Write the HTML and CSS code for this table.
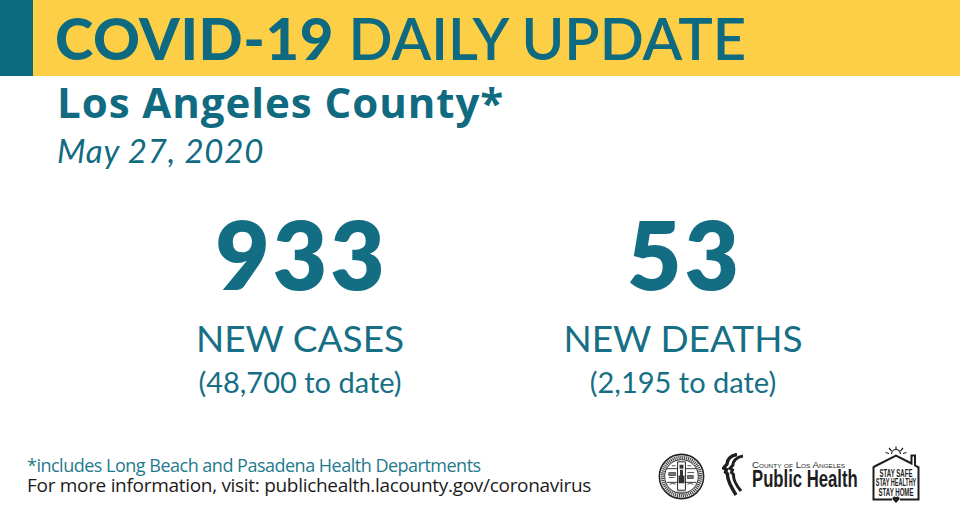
FILE: index.html
```html
<!DOCTYPE html>
<html lang="en">
<head>
<meta charset="utf-8">
<title>COVID-19 Daily Update</title>
<link rel="stylesheet" href="styles.css">
</head>
<body>
<div class="page">
  <header class="banner">
    <div class="accent"></div>
    <div class="bar">
      <h1 class="title"><span class="title-strong">COVID-19</span> DAILY UPDATE</h1>
    </div>
  </header>

  <section class="intro">
    <h2 class="county">Los Angeles County*</h2>
    <p class="date">May 27, 2020</p>
  </section>

  <section class="stats">
    <div class="stat">
      <div class="stat-num">933</div>
      <div class="stat-label">NEW CASES</div>
      <div class="stat-total">(48,700 to date)</div>
    </div>
    <div class="stat">
      <div class="stat-num">53</div>
      <div class="stat-label">NEW DEATHS</div>
      <div class="stat-total">(2,195 to date)</div>
    </div>
  </section>

  <footer class="footer">
    <div class="notes">
      <p class="note">*includes Long Beach and Pasadena Health Departments</p>
      <p class="info">For more information, visit: publichealth.lacounty.gov/coronavirus</p>
    </div>
    <div class="logos">
      <svg class="seal" viewBox="0 0 48 48" width="47" height="47" aria-label="County seal">
        <circle cx="24" cy="24" r="22.6" fill="#fff" stroke="#222" stroke-width="1.6"/>
        <circle cx="24" cy="24" r="19.5" fill="none" stroke="#444" stroke-width="3.4" stroke-dasharray="1.2 0.8"/>
        <circle cx="24" cy="24" r="17.2" fill="#fff" stroke="#222" stroke-width="1"/>
        <path d="M9 16 H39 M9 30 H39" stroke="#333" stroke-width="1"/>
        <path d="M20 9 H28 V38 H20 Z" fill="#fff" stroke="#222" stroke-width="1"/>
        <rect x="22" y="12" width="4" height="4" fill="#333"/>
        <path d="M22.5 17 h3 v6 h1.5 v8 h-6 v-8 h1.5 Z" fill="#333"/>
        <path d="M11 20 h7 v3 h-7 Z M11 25 h6 M30 20 h7 M30 23 h6 v3 h-6 Z" stroke="#555" stroke-width="1" fill="#777"/>
        <path d="M12 32 q3 -2 6 0 M30 32 q3 -2 6 0 M14 13 h4 M30 13 h4" stroke="#555" stroke-width="1" fill="none"/>
        <path d="M18 40 h12" stroke="#555" stroke-width="1"/>
      </svg>
      <svg class="ph" viewBox="0 0 138 44" width="138" height="44" aria-label="County of Los Angeles Public Health">
        <path d="M15 1.5 C8 2.5 5 7 5 11 L1.5 15 L4.5 16.5 L3.5 19 L5.5 21 C5 27 9 34 14 42" fill="none" stroke="#1e1e1e" stroke-width="3.4"/>
        <path d="M21 3 C14 4 11 8.5 11 12 L8 15.5 L10.5 17 L9.5 19.5 L11.5 21.5 C11 27 14 32 19 38" fill="none" stroke="#1e1e1e" stroke-width="3"/>
        <text class="ph-county" x="30" y="15" textLength="93" lengthAdjust="spacingAndGlyphs">County of Los Angeles</text>
        <g transform="translate(30 34) scale(1 1.42)">
          <text class="ph-name" x="0" y="0">Public Health</text>
        </g>
      </svg>
      <svg class="stay" viewBox="0 0 50 60" width="50" height="60" aria-label="Stay safe, stay healthy, stay home">
        <path d="M20.5 9 a4.5 4.5 0 0 1 9 0" fill="none" stroke="#222" stroke-width="1.2"/>
        <path d="M25 1.5 V5 M18 3 L20.5 6 M32 3 L29.5 6 M14.5 7.5 L18 8.5 M35.5 7.5 L32 8.5" stroke="#222" stroke-width="1.2"/>
        <path d="M2.5 22 L25 10.5 L40.5 18.5 V10.5 H44 V20.5 L47.5 22.3" fill="none" stroke="#1e1e1e" stroke-width="2"/>
        <path d="M2.5 21.5 V54.5 H21 M29 54.5 H47.5 V21.5" fill="none" stroke="#1e1e1e" stroke-width="2"/>
        <path d="M25 58 L21.8 54.8 A1.8 1.8 0 0 1 25 52.3 A1.8 1.8 0 0 1 28.2 54.8 Z" fill="#1e1e1e"/>
        <g transform="translate(25 31.5) scale(1 1.73)">
          <text class="stay-text stay-a" x="0" y="0" text-anchor="middle">STAY SAFE</text>
        </g>
        <g transform="translate(25 41) scale(1 1.91)">
          <text class="stay-text stay-b" x="0" y="0" text-anchor="middle">STAY HEALTHY</text>
        </g>
        <g transform="translate(25 50.5) scale(1 1.73)">
          <text class="stay-text stay-a" x="0" y="0" text-anchor="middle">STAY HOME</text>
        </g>
      </svg>
    </div>
  </footer>
</div>
</body>
</html>
```

FILE: styles.css
```css
* { box-sizing: border-box; }

html, body {
  margin: 0;
  padding: 0;
  background: #ffffff;
}

.page {
  width: 960px;
  height: 514px;
  overflow: hidden;
  display: flex;
  flex-direction: column;
  background: #ffffff;
  font-family: "Lato", "Open Sans", "DejaVu Sans", sans-serif;
  color: #0f6b81;
}

/* ---------- banner ---------- */
.banner {
  display: flex;
  height: 76px;
  flex: none;
}

.accent {
  width: 33px;
  background: #0b6a80;
}

.bar {
  flex: 1;
  background: #fdcf46;
  padding-left: 22px;
}

.title {
  margin: 0;
  font-size: 58px;
  line-height: 76px;
  font-weight: 600;
  color: #0e6a80;
  white-space: nowrap;
}

.title-strong {
  font-weight: 900;
  letter-spacing: 0.6px;
}

/* ---------- intro ---------- */
.intro {
  padding-left: 57px;
}

.county {
  margin: 5px 0 0;
  font-family: "Open Sans", "Lato", sans-serif;
  font-size: 42px;
  line-height: 42px;
  font-weight: 700;
  letter-spacing: 0.95px;
  color: #106b81;
  white-space: nowrap;
}

.date {
  margin: 11px 0 0;
  font-size: 33px;
  line-height: 33px;
  font-style: italic;
  font-weight: 400;
  letter-spacing: 0.8px;
  color: #116b81;
}

/* ---------- stats ---------- */
.stats {
  display: flex;
  gap: 143px;
  padding-left: 180px;
  margin-top: 40px;
}

.stat {
  width: 240px;
  display: flex;
  flex-direction: column;
  align-items: center;
  text-align: center;
}

.stat-num {
  font-size: 94px;
  line-height: 94px;
  font-weight: 800;
  letter-spacing: 3px;
  margin-right: -3px;
  color: #136e84;
}

.stat-label {
  margin-top: 18px;
  font-size: 37px;
  line-height: 37px;
  font-weight: 400;
  color: #166f85;
  white-space: nowrap;
}

.stat-total {
  margin-top: 11px;
  font-size: 29px;
  line-height: 29px;
  font-weight: 400;
  color: #166f85;
  white-space: nowrap;
}

/* ---------- footer ---------- */
.footer {
  margin-top: auto;
  display: flex;
  justify-content: space-between;
  align-items: center;
  padding: 0 39px 9px 27px;
}

.notes {
  font-family: "Open Sans", "DejaVu Sans", sans-serif;
  white-space: nowrap;
}

.note {
  margin: 0;
  font-size: 18px;
  line-height: 20px;
  letter-spacing: -0.5px;
  color: #1f7a8e;
}

.info {
  margin: 0;
  font-size: 19px;
  line-height: 20px;
  letter-spacing: -0.3px;
  color: #1c1c1c;
}

.logos {
  display: flex;
  align-items: center;
  flex: none;
}

.seal {
  display: block;
  margin-top: 2px;
}

.ph {
  display: block;
  margin-left: 17px;
}

.ph-county {
  font-family: "Liberation Sans", "DejaVu Sans", sans-serif;
  font-size: 9.1px;
  font-variant: small-caps;
  fill: #1e1e1e;
}

.ph-name {
  font-family: "Liberation Sans", "DejaVu Sans", sans-serif;
  font-size: 16.7px;
  font-weight: 700;
  fill: #1e1e1e;
}

.stay {
  display: block;
  margin-left: 11px;
}

.stay-text {
  font-family: "Liberation Sans", "DejaVu Sans", sans-serif;
  font-weight: 700;
  fill: #1e1e1e;
}

.stay-a { font-size: 6.06px; }
.stay-b { font-size: 5.48px; }
```
